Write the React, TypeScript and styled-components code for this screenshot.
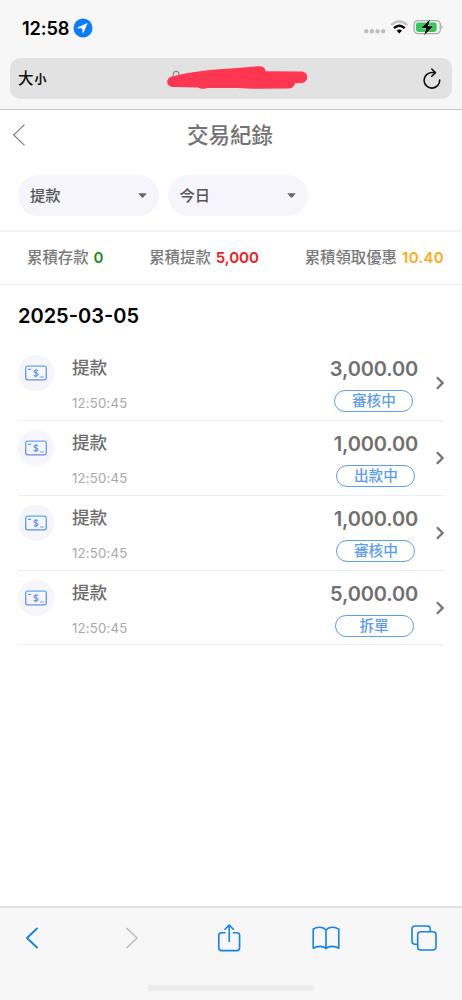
import React from 'react';
import styled, { createGlobalStyle } from 'styled-components';

const GlobalStyle = createGlobalStyle`
  * { box-sizing: border-box; }
  body {
    margin: 0;
    background: #fff;
    font-family: Inter, "Noto Sans CJK TC", sans-serif;
    color: #737373;
  }
  svg { display: block; flex: none; }
`;

const Screen = styled.div`
  width: 462px;
  height: 1000px;
  display: flex;
  flex-direction: column;
  overflow: hidden;
  background: #fff;
`;

const BrowserTop = styled.header`
  height: 110px;
  flex: none;
  background: #f7f7f7;
  border-bottom: 1px solid #c9c9cb;
`;

const StatusBar = styled.div`
  height: 58px;
  display: flex;
  align-items: center;
  padding: 0 18px 3px 22px;
`;

const Clock = styled.span`
  width: 51px;
  font-size: 18.2px;
  font-weight: 600;
  line-height: 24px;
  letter-spacing: -0.1px;
  color: #000;
  white-space: nowrap;
`;

const StatusIcons = styled.div`
  margin-left: auto;
  padding-top: 1px;
  display: flex;
  align-items: center;
`;

const AddressBar = styled.div`
  height: 41px;
  margin: 0 10px;
  padding: 0 11px 0 8px;
  display: flex;
  align-items: center;
  border-radius: 10px;
  background: #e2e2e3;
`;

const TextSize = styled.div`
  width: 149px;
  padding-top: 2px;
  display: flex;
  align-items: baseline;
  gap: 1px;
  color: #111;
  font-weight: 500;
  font-size: 15.5px;
  line-height: 24px;
`;

const SmallGlyph = styled.span`
  font-size: 12px;
  font-weight: 700;
`;

const Redaction = styled.div`
  padding-bottom: 3px;
`;

const ReloadSlot = styled.div`
  margin-left: auto;
`;

const TitleBar = styled.div`
  height: 52px;
  flex: none;
  display: grid;
  grid-template-columns: 40px 1fr 42px;
  align-items: center;
  padding: 0 0 2px;
`;

const BackSlot = styled.div`
  padding-left: 12px;
`;

const Title = styled.h1`
  margin: 0;
  text-align: center;
  font-size: 21.5px;
  line-height: 30px;
  font-weight: 500;
  color: #737373;
`;

const Filters = styled.div`
  height: 70px;
  flex: none;
  display: flex;
  gap: 9px;
  padding: 13px 18px 0;
  border-bottom: 2px solid #f4f4f5;
`;

const Select = styled.button`
  width: 140.5px;
  height: 41px;
  padding: 0 12px;
  border: 0;
  border-radius: 21px;
  display: flex;
  align-items: center;
  justify-content: space-between;
  background: #f6f5fb;
  color: #555;
  font: 500 15.3px/22px Inter, "Noto Sans CJK TC", sans-serif;
`;

const Stats = styled.div`
  height: 53px;
  flex: none;
  display: flex;
  align-items: center;
  justify-content: space-between;
  padding: 0 18px 1px 27px;
  border-bottom: 1px solid #eaeef1;
`;

const Stat = styled.div`
  display: flex;
  align-items: center;
  gap: 5px;
  font-size: 15.4px;
  line-height: 22px;
  font-weight: 500;
  color: #7a7a7a;
  white-space: nowrap;
`;

const StatValue = styled.span<{ $color: string; $spacing: number }>`
  font-size: 15px;
  font-weight: 600;
  letter-spacing: ${(p) => p.$spacing}px;
  color: ${(p) => p.$color};
`;

const DateHeading = styled.h2`
  margin: 0;
  height: 61px;
  flex: none;
  padding: 0 18px;
  font-size: 20px;
  line-height: 62px;
  font-weight: 600;
  color: #000;
`;

const List = styled.ul`
  list-style: none;
  margin: 0;
  padding: 0 18px;
  flex: 1;
`;

const Row = styled.li`
  height: 74.85px;
  display: flex;
  border-bottom: 1px solid #ededf3;
`;

const IconDisc = styled.div`
  width: 36px;
  height: 36px;
  margin-top: 9px;
  border-radius: 50%;
  display: flex;
  align-items: center;
  justify-content: center;
  background: #f6f5fb;
`;

const Info = styled.div`
  padding: 8px 0 0 18px;
`;

const Kind = styled.div`
  font-size: 17.6px;
  line-height: 27px;
  font-weight: 500;
  color: #6c6c6c;
`;

const Time = styled.div`
  margin-top: 12px;
  font-size: 13.2px;
  line-height: 20px;
  letter-spacing: 0.2px;
  color: #a8a8a8;
`;

const Amounts = styled.div`
  margin-left: auto;
  display: flex;
  flex-direction: column;
  align-items: center;
  padding-top: 10px;
`;

const Amount = styled.div`
  font-size: 20px;
  line-height: 26px;
  font-weight: 600;
  letter-spacing: -0.15px;
  color: #707070;
`;

const Badge = styled.span`
  width: 79px;
  height: 22px;
  margin-top: 8px;
  border: 1px solid #5c9df5;
  border-radius: 11px;
  text-align: center;
  font-size: 14.6px;
  line-height: 20px;
  font-weight: 500;
  color: #5b9bf2;
`;

const RowArrow = styled.div`
  width: 26px;
  display: flex;
  justify-content: flex-end;
  padding-top: 30px;
`;

const BrowserBottom = styled.footer`
  height: 94px;
  flex: none;
  background: #f7f7f7;
  border-top: 2px solid #e0e0e0;
`;

const Toolbar = styled.nav`
  height: 59px;
  display: grid;
  grid-template-columns: repeat(5, 28px);
  column-gap: 70px;
  align-items: center;
  justify-items: center;
  padding-left: 18px;
`;

const HomeIndicator = styled.div`
  width: 166px;
  height: 6px;
  margin: 18px auto 0;
  border-radius: 3px;
  background: #ececec;
`;

const Caret = () => (
  <svg width="9" height="5" viewBox="0 0 9 5">
    <path d="M0.2 0.2H8.8L5.4 4.3Q4.5 5 3.6 4.3Z" fill="#686868" />
  </svg>
);

const MoneyIcon = () => (
  <svg width="22" height="16" viewBox="0 0 22 16" fill="none">
    <defs>
      <linearGradient id="bill" x1="0" y1="0" x2="0" y2="16" gradientUnits="userSpaceOnUse">
        <stop stopColor="#5ba9fa" />
        <stop offset="1" stopColor="#6389f3" />
      </linearGradient>
    </defs>
    <g stroke="url(#bill)">
      <rect x="0.7" y="1.2" width="20.6" height="13.6" rx="1.8" strokeWidth="1.3" />
      <path d="M3 4.4h3.2M15.3 12h3.4" strokeWidth="1.2" />
      <path d="M13 6.1C12.6 5.3 11.9 5 11 5C9.8 5 9 5.5 9 6.4C9 8.5 13 7.3 13 9.6C13 10.6 12.1 11.1 11 11.1C9.9 11.1 9.2 10.7 8.8 9.9M11 4V12.2" strokeWidth="1.2" />
    </g>
  </svg>
);

const Records = [
  { amount: '3,000.00', status: '審核中' },
  { amount: '1,000.00', status: '出款中' },
  { amount: '1,000.00', status: '審核中' },
  { amount: '5,000.00', status: '拆單' },
];

const Totals = [
  { label: '累積存款', value: '0', color: '#139013', spacing: 0 },
  { label: '累積提款', value: '5,000', color: '#ee1c20', spacing: 0 },
  { label: '累積領取優惠', value: '10.40', color: '#fbac20', spacing: 0.3 },
];

export default function App() {
  return (
    <>
      <GlobalStyle />
      <Screen>
        <BrowserTop>
          <StatusBar>
            <Clock>12:58</Clock>
            <svg width="20" height="20" viewBox="0 0 20 20">
              <circle cx="10" cy="10" r="9.5" fill="#0a7cff" />
              <path d="M14.6 5.1L4.4 9.5Q4 10 4.7 10.3L9.3 10.5L9.6 15Q9.9 15.8 10.4 15.1Z" fill="#fff" />
            </svg>
            <StatusIcons>
              <svg width="80" height="18" viewBox="0 0 80 18">
                <g fill="#bcbcbe">
                  <rect x="0.3" y="10.2" width="4" height="4" rx="1.3" />
                  <rect x="5.9" y="10.2" width="4" height="4" rx="1.3" />
                  <rect x="11.5" y="10.2" width="4" height="4" rx="1.3" />
                  <rect x="17.1" y="10.2" width="4" height="4" rx="1.3" />
                </g>
                <g fill="none" strokeWidth="2.5">
                  <path d="M27.3 6.1Q35.3 -1.3 43.3 6.1" stroke="#c6c6c8" />
                  <path d="M29.9 9.1Q35.3 4.5 40.7 9.1" stroke="#000" />
                </g>
                <path d="M32.6 11.5Q35.3 9.5 38 11.5L35.3 14.4Z" fill="#000" />
                <rect x="50.1" y="1.6" width="26.2" height="13" rx="4" fill="none" stroke="#aaa" strokeWidth="1.3" />
                <rect x="52" y="3.4" width="20.6" height="9.6" rx="2.4" fill="#34c759" />
                <path d="M77.5 5.9Q79.9 8 77.5 10.2Z" fill="#aaa" />
                <path d="M66 0.4L57.2 9H62.3L60.2 16.2L69 7.2H63.9Z" fill="#000" stroke="#f7f7f7" strokeWidth="0.7" paintOrder="stroke" />
              </svg>
            </StatusIcons>
          </StatusBar>
          <AddressBar>
            <TextSize>
              大<SmallGlyph>小</SmallGlyph>
            </TextSize>
            <Redaction>
              <svg width="141" height="25" viewBox="0 0 141 25">
                <path d="M6.3 12V9.4A2.8 3 0 0 1 12 9.4V12" fill="none" stroke="#8a8a8c" strokeWidth="1.2" />
                <path d="M5 11.4C22 7 44 4.3 64 3.4L91 1.3Q98 0.7 98.5 6.3L135 6.4C142 7 142 17 135 18L128 18.2Q127 23.3 121 23.6L86 23.8L70 23H40Q35 25 31 22.4L6 22C-1 22-2 13 5 11.4Z" fill="#ff364f" />
              </svg>
            </Redaction>
            <ReloadSlot>
              <svg width="19" height="22" viewBox="0 0 19 22" fill="none" stroke="#111" strokeWidth="1.6" strokeLinecap="round" strokeLinejoin="round">
                <path d="M17.7 12A7.8 7.8 0 1 1 9.9 4.5H13" />
                <path d="M9.8 1L13.4 4.6L9.8 8.2" />
              </svg>
            </ReloadSlot>
          </AddressBar>
        </BrowserTop>

        <TitleBar>
          <BackSlot>
            <svg width="14" height="22" viewBox="0 0 14 22" fill="none" stroke="#777" strokeWidth="1.1">
              <path d="M12.5 0.6L1.7 11L12.5 21.4" />
            </svg>
          </BackSlot>
          <Title>交易紀錄</Title>
        </TitleBar>

        <Filters>
          <Select>提款<Caret /></Select>
          <Select>今日<Caret /></Select>
        </Filters>

        <Stats>
          {Totals.map((t) => (
            <Stat key={t.label}>
              {t.label}
              <StatValue $color={t.color} $spacing={t.spacing}>{t.value}</StatValue>
            </Stat>
          ))}
        </Stats>

        <DateHeading>2025-03-05</DateHeading>

        <List>
          {Records.map((r, i) => (
            <Row key={i}>
              <IconDisc><MoneyIcon /></IconDisc>
              <Info>
                <Kind>提款</Kind>
                <Time>12:50:45</Time>
              </Info>
              <Amounts>
                <Amount>{r.amount}</Amount>
                <Badge>{r.status}</Badge>
              </Amounts>
              <RowArrow>
                <svg width="9" height="14" viewBox="0 0 9 14" fill="none" stroke="#737373" strokeWidth="2.3">
                  <path d="M1.9 1.3L7.6 7L1.9 12.7" />
                </svg>
              </RowArrow>
            </Row>
          ))}
        </List>

        <BrowserBottom>
          <Toolbar>
            <svg width="16" height="22" viewBox="0 0 16 22" fill="none" stroke="#1581ed" strokeWidth="1.9" strokeLinecap="round" strokeLinejoin="round">
              <path d="M13 1.5L3 11L13 20.5" />
            </svg>
            <svg width="16" height="22" viewBox="0 0 16 22" fill="none" stroke="#bebebe" strokeWidth="1.7" strokeLinecap="round" strokeLinejoin="round">
              <path d="M5 1.5L15 11L5 20.5" />
            </svg>
            <svg width="25" height="28" viewBox="0 0 25 28" fill="none" stroke="#1581ed" strokeWidth="1.6" strokeLinecap="round" strokeLinejoin="round">
              <path d="M9 8.8H5.6Q2.8 8.8 2.8 11.6V23.8Q2.8 26.6 5.6 26.6H20.8Q23.6 26.6 23.6 23.8V11.6Q23.6 8.8 20.8 8.8H17.4M13.2 17.5V1.2M9 5.2L13.2 1L17.4 5.2" />
            </svg>
            <svg width="28" height="24" viewBox="0 0 28 24" fill="none" stroke="#1581ed" strokeWidth="1.6" strokeLinejoin="round">
              <path d="M14 4C11 0.4 5 0.5 1.2 3.2V22.2C5 19.8 11 19.5 14 22.5C17 19.5 23 19.8 26.8 22.2V3.2C23 0.5 17 0.4 14 4ZM14 4V22.5" />
            </svg>
            <svg width="26" height="26" viewBox="0 0 26 26" fill="none" stroke="#1581ed" strokeWidth="1.6">
              <path d="M6.7 19.2H4Q1 19.2 1 16.2V4Q1 1 4 1H16.3Q19.3 1 19.3 4V6.7" />
              <rect x="6.7" y="6.7" width="18.3" height="18.3" rx="3" />
            </svg>
          </Toolbar>
          <HomeIndicator />
        </BrowserBottom>
      </Screen>
    </>
  );
}
